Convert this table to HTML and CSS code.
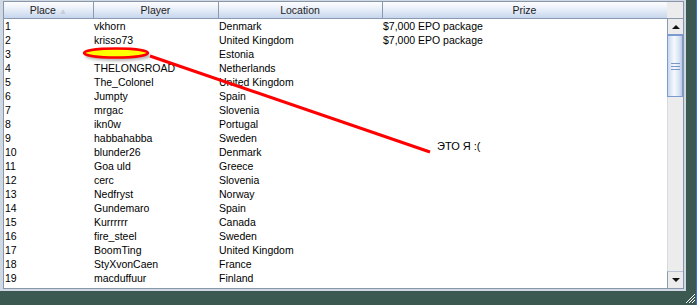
FILE: index.html
```html
<!DOCTYPE html>
<html lang="ru">
<head>
  <meta charset="UTF-8" />
  <title>Standings</title>
  <link rel="stylesheet" href="styles.css">
</head>
<body>
  <div class="window">
    <div class="panel">
      <div class="box">
        <table class="standings">
          <colgroup>
            <col class="c-place"><col class="c-player"><col class="c-loc"><col class="c-prize">
          </colgroup>
          <thead>
            <tr><th>Place <span class="sort">&#9650;</span></th><th>Player</th><th>Location</th><th>Prize</th></tr>
          </thead>
          <tbody>
            <tr><td>1</td><td>vkhorn</td><td>Denmark</td><td>$7,000 EPO package</td></tr>
            <tr><td>2</td><td>krisso73</td><td>United Kingdom</td><td>$7,000 EPO package</td></tr>
            <tr><td>3</td><td></td><td>Estonia</td><td></td></tr>
            <tr><td>4</td><td>THELONGROAD</td><td>Netherlands</td><td></td></tr>
            <tr><td>5</td><td>The_Colonel</td><td>United Kingdom</td><td></td></tr>
            <tr><td>6</td><td>Jumpty</td><td>Spain</td><td></td></tr>
            <tr><td>7</td><td>mrgac</td><td>Slovenia</td><td></td></tr>
            <tr><td>8</td><td>ikn0w</td><td>Portugal</td><td></td></tr>
            <tr><td>9</td><td>habbahabba</td><td>Sweden</td><td></td></tr>
            <tr><td>10</td><td>blunder26</td><td>Denmark</td><td></td></tr>
            <tr><td>11</td><td>Goa uld</td><td>Greece</td><td></td></tr>
            <tr><td>12</td><td>cerc</td><td>Slovenia</td><td></td></tr>
            <tr><td>13</td><td>Nedfryst</td><td>Norway</td><td></td></tr>
            <tr><td>14</td><td>Gundemaro</td><td>Spain</td><td></td></tr>
            <tr><td>15</td><td>Kurrrrrr</td><td>Canada</td><td></td></tr>
            <tr><td>16</td><td>fire_steel</td><td>Sweden</td><td></td></tr>
            <tr><td>17</td><td>BoomTing</td><td>United Kingdom</td><td></td></tr>
            <tr><td>18</td><td>StyXvonCaen</td><td>France</td><td></td></tr>
            <tr><td>19</td><td>macduffuur</td><td>Finland</td><td></td></tr>
          </tbody>
        </table>

        <div class="scrollbar">
          <div class="corner"></div>
          <div class="btn up"><span class="tri-up"></span></div>
          <div class="thumb"><span class="grip"></span></div>
          <div class="track"></div>
          <div class="btn down"><span class="tri-down"></span></div>
        </div>
      </div>
    </div>

    <!-- marker over row 3 and the arrow to the note -->
    <svg class="marks" width="697" height="305" viewBox="0 0 697 305">
      <defs>
        <filter id="soft" x="-20%" y="-100%" width="140%" height="300%">
          <feGaussianBlur stdDeviation="1.5" />
        </filter>
      </defs>
      <ellipse cx="118" cy="56" rx="33" ry="5" fill="#777" opacity="0.55" filter="url(#soft)" />
      <ellipse cx="116" cy="53" rx="32" ry="4.5" fill="#ffff00" stroke="#ff0000" stroke-width="2.5" />
      <line x1="150" y1="56" x2="430" y2="152" stroke="#ff0000" stroke-width="3" />
      <g stroke="#ffffff" stroke-width="1">
        <line x1="686" y1="303" x2="695" y2="294" />
        <line x1="689" y1="303" x2="695" y2="297" />
        <line x1="692" y1="303" x2="695" y2="300" />
      </g>
    </svg>
    <div class="note">ЭТО Я :(</div>
  </div>
</body>
</html>
```

FILE: styles.css
```css
body {
  margin: 0;
  background: #3b5950;
  font-family: "Liberation Sans", Arial, sans-serif;
}
.window {
  position: relative;
  width: 696px;
  height: 305px;
  background: #3b5950;
  border-right: 1px solid #3d6fd6;
}
.panel {
  width: 681px;
  height: 288px;
  padding: 1px 2px 2px 3px;
  background: #cfd8e3;
}
.box {
  display: grid;
  grid-template-columns: 663px 16px;
  height: 286px;
  border: 1px solid #8796a8;
  background: #fff;
}

/* table */
.standings {
  width: 663px;
  table-layout: fixed;
  border-collapse: collapse;
  font-size: 10.5px;
  color: #000;
  align-self: start;
}
.c-place { width: 89px; }
.c-player { width: 125px; }
.c-loc { width: 164px; }
.c-prize { width: 285px; }
.standings th {
  height: 16px;
  padding: 0;
  box-sizing: border-box;
  font-weight: normal;
  color: #222;
  text-align: center;
  background: linear-gradient(#fdfdff, #e8eef8 45%, #c6d6ee);
  border-right: 1px solid #8a9aae;
  border-bottom: 1px solid #8a9aae;
  border-left: 1px solid #fff;
}
.standings th:first-child { border-left: none; }
.sort {
  font-size: 8px;
  color: #c5ccd8;
}
.standings td {
  height: 14px;
  padding: 0 1px;
  line-height: 14px;
  white-space: nowrap;
  overflow: hidden;
}

/* scrollbar */
.scrollbar {
  display: flex;
  flex-direction: column;
  background: #ececec;
}
.corner {
  height: 17px;
  box-sizing: border-box;
  background: #ececec;
  border-bottom: 1px solid #8a9aae;
}
.btn {
  height: 15px;
  display: flex;
  align-items: center;
  justify-content: center;
  background: #ececec;
  border-left: 1px solid #8a9aae;
}
.btn.up { border-bottom: 1px solid #7b9bd0; }
.btn.down { border-top: 1px solid #b8c4d4; height: 16px; }
.tri-up, .tri-down {
  width: 0;
  height: 0;
  border-left: 4px solid transparent;
  border-right: 4px solid transparent;
}
.tri-up { border-bottom: 4px solid #111; }
.tri-down { border-top: 4px solid #111; }
.thumb {
  height: 60px;
  display: flex;
  align-items: center;
  justify-content: center;
  border: 1px solid #7b9bd0;
  background: linear-gradient(90deg, #c9d8ee, #f6f9fd 45%, #d7e3f3 80%, #b6c9e6);
}
.grip {
  width: 9px;
  height: 5px;
  border-top: 1px solid #7b98c9;
  border-bottom: 1px solid #7b98c9;
  background: linear-gradient(transparent 2px, #7b98c9 2px, #7b98c9 3px, transparent 3px);
}
.track {
  flex: 1;
  background: #ececec;
  border-left: 1px solid #d6dbe2;
}

/* note over the table */
.marks {
  position: absolute;
  left: 0;
  top: 0;
  pointer-events: none;
}
.note {
  position: absolute;
  left: 437px;
  top: 140px;
  font-size: 11px;
  color: #000;
}
```
